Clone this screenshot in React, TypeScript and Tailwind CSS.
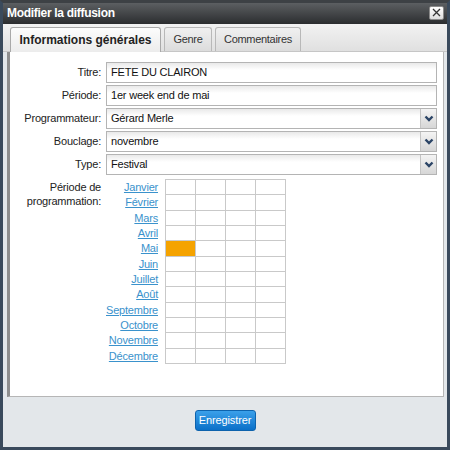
import React from 'react';

const months = [
  'Janvier',
  'Février',
  'Mars',
  'Avril',
  'Mai',
  'Juin',
  'Juillet',
  'Août',
  'Septembre',
  'Octobre',
  'Novembre',
  'Décembre',
];

const Chevron = () => (
  <svg width="10" height="7" viewBox="0 0 10 7">
    <polyline points="1.5,1.5 5,5 8.5,1.5" fill="none" stroke="#2b4466" strokeWidth="2.4" />
  </svg>
);

const TextField = ({ value }: { value: string }) => (
  <div className="flex h-[21px] flex-1 items-center border border-[#b4b4b4] bg-[linear-gradient(to_bottom,#e9e9e9,#ffffff_7px)] pl-[4px] text-[11px] tracking-[-0.2px] text-[#111]">
    {value}
  </div>
);

const SelectField = ({ value }: { value: string }) => (
  <div className="flex h-[21px] flex-1 items-stretch border border-[#b4b4b4] bg-[linear-gradient(to_bottom,#e9e9e9,#ffffff_7px)] text-[11px] tracking-[-0.2px] text-[#111]">
    <div className="flex flex-1 items-center pl-[4px]">{value}</div>
    <div className="flex w-[16px] items-center justify-center border-l border-[#c4c4c4] bg-[linear-gradient(to_bottom,#f4f4f4,#d6d6d6)]">
      <Chevron />
    </div>
  </div>
);

const Row = ({ label, children }: { label: string; children: React.ReactNode }) => (
  <div className="flex items-center">
    <div className="w-[91px] text-right text-[11px] tracking-[-0.2px] text-[#222]">{label}</div>
    <div className="ml-[5px] mr-[6px] flex flex-1">{children}</div>
  </div>
);

export default function App() {
  return (
    <div className="h-[451px] w-[451px] bg-white" style={{ fontFamily: '"Liberation Sans", Arial, sans-serif' }}>
      <div className="flex h-[450px] w-[450px] flex-col border-[3px] border-[#3a4a5c] border-t-[#3d4145] bg-[#e3e7ea]">
        {/* title bar */}
        <div className="flex h-[21px] items-center justify-between bg-[linear-gradient(to_bottom,#5c5f62,#2b2d2f)] pb-[2px] pl-[4px] pr-[3px]">
          <span className="text-[12px] font-bold tracking-[-0.3px] text-white">Modifier la diffusion</span>
          <div className="flex h-[14px] w-[15px] items-center justify-center rounded-[2px] border border-[#8a8a8a] bg-[linear-gradient(to_bottom,#ffffff,#dcdcdc)]">
            <svg width="9" height="9" viewBox="0 0 9 9">
              <path d="M1 1 L8 8 M8 1 L1 8" stroke="#333" strokeWidth="1.3" />
            </svg>
          </div>
        </div>

        {/* tabs */}
        <div className="flex h-[28px] items-end gap-[3px] border-b border-[#c6c6c6] bg-[linear-gradient(to_bottom,#f2f2f2,#e0e0e0)] pl-[7px]">
          <div className="-mb-px flex h-[25px] w-[151px] items-center justify-center rounded-t-[3px] border border-b-0 border-[#a9a9a9] bg-[linear-gradient(to_bottom,#fcfcfc,#ececec)] text-[12px] font-bold text-[#222]">
            Informations générales
          </div>
          <div className="flex h-[24px] w-[48px] items-center justify-center rounded-t-[3px] border border-b-0 border-[#b8b8b8] bg-[linear-gradient(to_bottom,#f0f0f0,#dcdcdc)] text-[11px] tracking-[-0.3px] text-[#333]">
            Genre
          </div>
          <div className="flex h-[24px] w-[86px] items-center justify-center rounded-t-[3px] border border-b-0 border-[#b8b8b8] bg-[linear-gradient(to_bottom,#f0f0f0,#dcdcdc)] text-[11px] tracking-[-0.3px] text-[#333]">
            Commentaires
          </div>
        </div>

        {/* panel */}
        <div className="ml-[4px] mr-[3px] flex h-[345px] flex-col gap-[2px] border-b border-l-[3px] border-r border-[#b6b6b6] border-l-[#8e8e8e] bg-white pt-[10px]">
          <Row label="Titre:">
            <TextField value="FETE DU CLAIRON" />
          </Row>
          <Row label="Période:">
            <TextField value="1er week end de mai" />
          </Row>
          <Row label="Programmateur:">
            <SelectField value="Gérard Merle" />
          </Row>
          <Row label="Bouclage:">
            <SelectField value="novembre" />
          </Row>
          <Row label="Type:">
            <SelectField value="Festival" />
          </Row>

          <div className="mt-[2px] flex">
            <div className="w-[91px] pt-[1px] text-right text-[11px] leading-[14px] tracking-[-0.2px] text-[#222]">
              Période de
              <br />
              programmation:
            </div>
            <div className="ml-[5px] grid h-[185px] w-[52px] grid-rows-[repeat(12,minmax(0,1fr))] pt-px">
              {months.map((m) => (
                <a
                  key={m}
                  href="#"
                  className="flex min-h-0 items-center justify-end whitespace-nowrap text-[11px] leading-[13px] tracking-[-0.2px] text-[#3a92cc] underline"
                >
                  {m}
                </a>
              ))}
            </div>
            <div className="ml-[7px] grid h-[185px] w-[121px] grid-cols-4 grid-rows-[repeat(12,minmax(0,1fr))] gap-px bg-[#c9c9c9] p-px">
              {months.map((m, i) =>
                [0, 1, 2, 3].map((c) => (
                  <div key={m + c} className={i === 4 && c === 0 ? 'bg-[#f5a300]' : 'bg-white'} />
                )),
              )}
            </div>
          </div>
        </div>

        {/* footer */}
        <div className="flex flex-1 justify-center pt-[13px]">
          <button className="h-[21px] w-[61px] rounded-[3px] border border-[#0d63ad] bg-[linear-gradient(to_bottom,#3aa0ea,#0b70c8)] text-[11px] tracking-[-0.1px] text-white">
            Enregistrer
          </button>
        </div>
      </div>
    </div>
  );
}
